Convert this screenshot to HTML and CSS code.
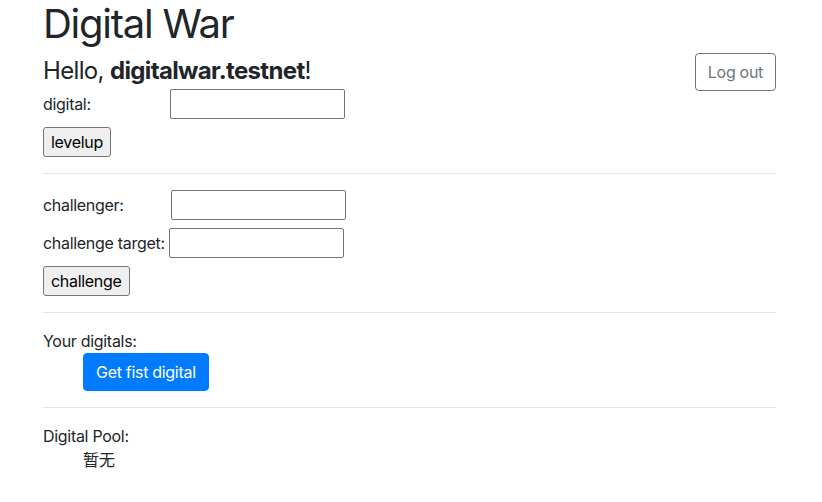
FILE: index.html
```html
<!DOCTYPE html>
<html lang="en">
<head>
<meta charset="utf-8">
<title>Digital War</title>
<link rel="stylesheet" href="styles.css">
</head>
<body>
<main class="page">
  <h1 class="title">Digital War</h1>
  <div class="hello-row">
    <button class="btn-logout" type="button">Log out</button>
    <h4 class="hello">Hello, <strong>digitalwar.testnet</strong>!</h4>
  </div>

  <section class="block">
    <div class="field">
      <label class="label label-digital">digital:</label>
      <input class="text-input" type="text">
    </div>
    <button class="plain-btn" type="button">levelup</button>
  </section>

  <hr class="sep">

  <section class="block">
    <div class="field">
      <label class="label label-challenger">challenger:</label>
      <input class="text-input" type="text">
    </div>
    <div class="field">
      <label class="label label-target">challenge target:</label>
      <input class="text-input" type="text">
    </div>
    <button class="plain-btn" type="button">challenge</button>
  </section>

  <hr class="sep">

  <section class="list">
    <div class="list-title">Your digitals:</div>
    <div class="indent">
      <button class="btn-primary" type="button">Get fist digital</button>
    </div>
  </section>

  <hr class="sep">

  <section class="list">
    <div class="list-title">Digital Pool:</div>
    <div class="indent empty">暂无</div>
  </section>
</main>
</body>
</html>
```

FILE: styles.css
```css
* { box-sizing: border-box; }

html, body {
  margin: 0;
  padding: 0;
  background: #fff;
}

body {
  font-family: Inter, "Noto Sans", "Noto Sans CJK SC", sans-serif;
  font-size: 16px;
  line-height: 1.5;
  letter-spacing: -0.3px;
  color: #212529;
}

.page {
  width: 733px;
  margin-left: 43px;
}

.title {
  margin: 0 0 8px;
  font-size: 40px;
  font-weight: 400;
  line-height: 48px;
  letter-spacing: -1.25px;
}

.hello-row {
  margin-bottom: 4px;
}

.hello {
  margin: 0;
  font-size: 24px;
  font-weight: 400;
  line-height: 29px;
  letter-spacing: -0.65px;
}

.hello strong {
  font-weight: 700;
}

.btn-logout {
  float: right;
  margin-top: -3px;
  height: 38px;
  padding: 6px 12px;
  font-family: inherit;
  font-size: 16px;
  line-height: 24px;
  letter-spacing: -0.3px;
  color: #6c757d;
  background: #fff;
  border: 1px solid #6c757d;
  border-radius: 4px;
}

.block {
  display: flex;
  flex-direction: column;
  align-items: flex-start;
  gap: 8px;
}

.field {
  display: flex;
  align-items: center;
  height: 30px;
}

.label-digital { width: 127px; }
.label-challenger { width: 128px; }
.label-target { margin-right: 4px; }

.text-input {
  width: 175px;
  height: 30px;
  padding: 1px 2px;
  font-family: inherit;
  font-size: 16px;
  border: 1px solid #767676;
  border-radius: 2px;
  background: #fff;
}

.plain-btn {
  height: 30px;
  padding: 0 7px;
  font-family: inherit;
  font-size: 16px;
  line-height: 24px;
  letter-spacing: -0.3px;
  color: #000;
  background: #efefef;
  border: 1px solid #767676;
  border-radius: 3px;
}

.sep {
  margin: 16px 0;
  border: 0;
  border-top: 1px solid rgba(0, 0, 0, 0.1);
}

.list-title {
  line-height: 24px;
}

.indent {
  padding-left: 40px;
}

.btn-primary {
  height: 38px;
  padding: 6px 12px;
  font-family: inherit;
  font-size: 16px;
  line-height: 24px;
  letter-spacing: -0.3px;
  color: #fff;
  background: #007bff;
  border: 1px solid #007bff;
  border-radius: 4px;
}

.empty {
  line-height: 24px;
  letter-spacing: 0;
}
```
